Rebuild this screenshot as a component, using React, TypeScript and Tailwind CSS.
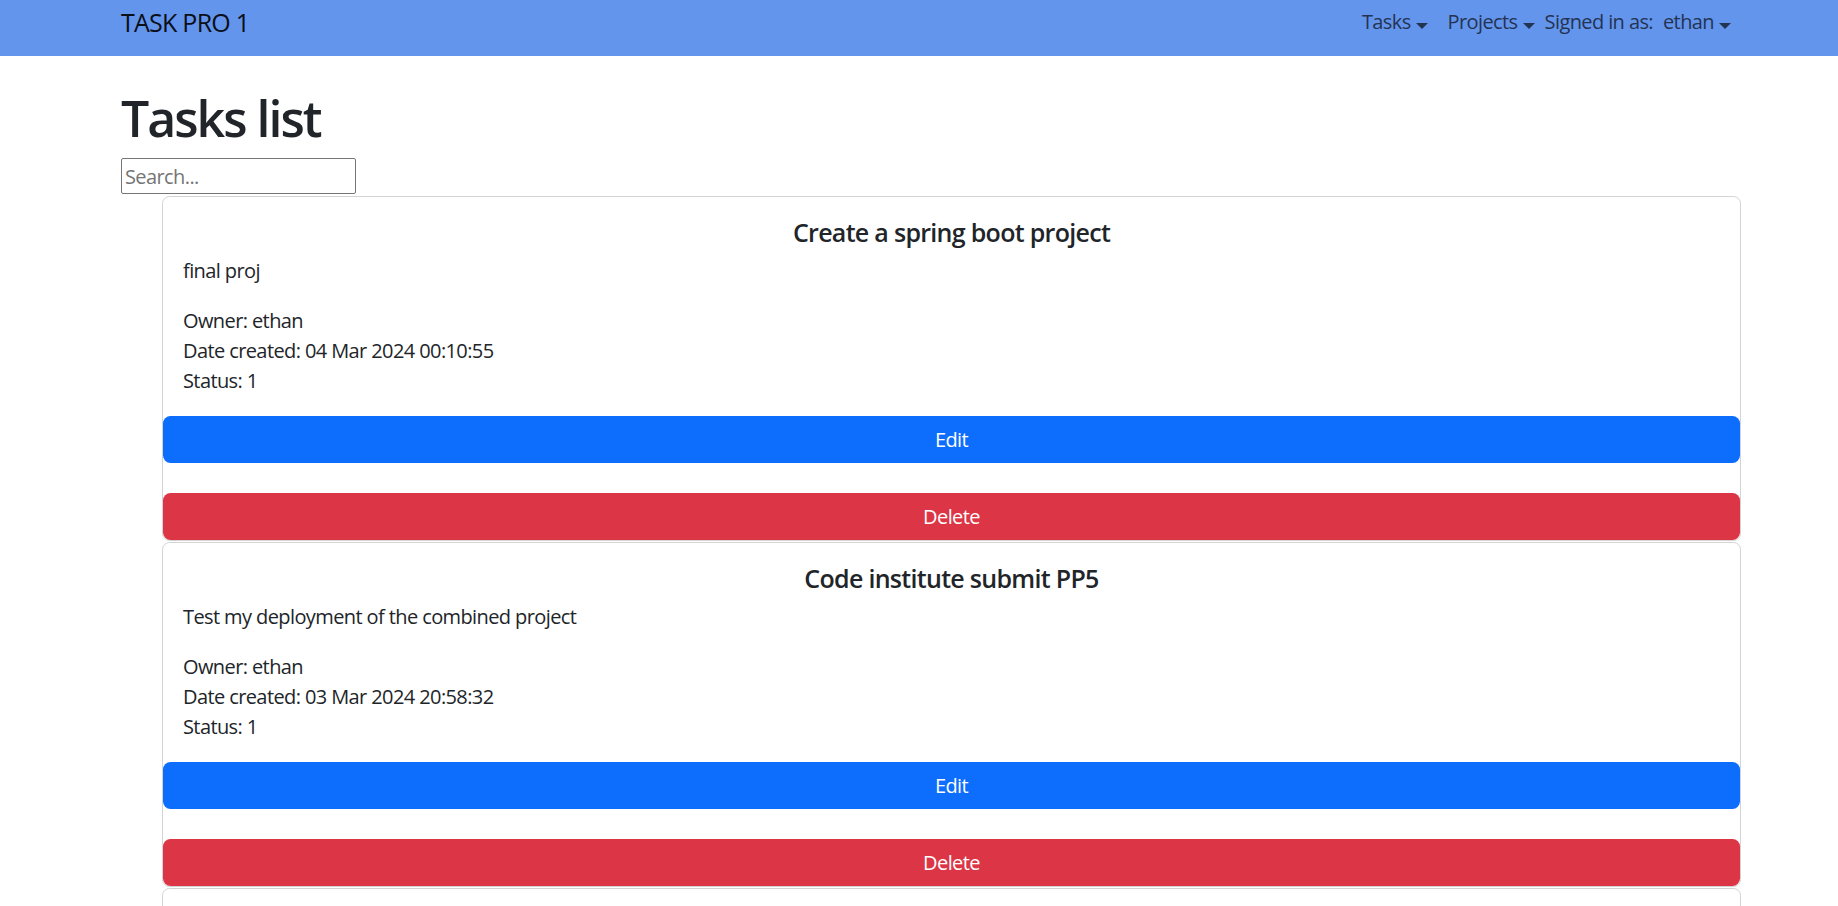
const tasks = [
  {
    title: 'Create a spring boot project',
    description: 'final proj',
    owner: 'ethan',
    created: '04 Mar 2024 00:10:55',
    status: 1,
  },
  {
    title: 'Code institute submit PP5',
    description: 'Test my deployment of the combined project',
    owner: 'ethan',
    created: '03 Mar 2024 20:58:32',
    status: 1,
  },
  {
    title: 'Write the README',
    description: 'Document the features and testing',
    owner: 'ethan',
    created: '02 Mar 2024 14:21:07',
    status: 0,
  },
];

const NavDropdown = ({ label }: { label: string }) => (
  <a href="#" className="px-[10px] flex items-baseline">
    {label}
    <span className="ml-[5px] inline-block align-[0.255em] border-t-[6px] border-x-[6px] border-b-0 border-t-current border-x-transparent" />
  </a>
);

const TaskCard = ({ task }: { task: (typeof tasks)[number] }) => (
  <div className="mb-[1px] border border-[#d3d3d3] rounded-[7.5px] bg-white">
    <div className="p-[20px]">
      <h5 className="text-center text-[25px] leading-[30px] font-semibold tracking-[-0.7px] mb-[9px]">{task.title}</h5>
      <p className="text-[20px] leading-[30px] tracking-[-0.6px] mb-[20px]">{task.description}</p>
      <p className="text-[20px] leading-[30px] tracking-[-0.6px]">
        Owner: {task.owner}
        <br />
        Date created: {task.created}
        <br />
        Status: {task.status}
      </p>
    </div>
    <button className="block w-full h-[47px] rounded-[7.5px] bg-[#0d6efd] text-white text-[20px] leading-[30px] tracking-[-0.6px]">
      Edit
    </button>
    <button className="block w-full h-[47px] mt-[30px] rounded-[7.5px] bg-[#dc3545] text-white text-[20px] leading-[30px] tracking-[-0.6px]">
      Delete
    </button>
  </div>
);

export default function App() {
  return (
    <div className="h-screen overflow-hidden bg-white text-[#212529] font-['Open_Sans',sans-serif]">
      <nav className="h-[56px] bg-[#6495ed]">
        <div className="ml-[121px] w-[1620px] h-[44px] flex items-center justify-between">
          <a href="#" className="text-[25px] leading-[30px] tracking-[-0.75px] text-[#0a0f18]">
            TASK PRO 1
          </a>
          <div className="flex items-center text-[20px] leading-[30px] tracking-[-0.6px] text-[#233453]">
            <NavDropdown label="Tasks" />
            <NavDropdown label="Projects" />
            <span>Signed in as:</span>
            <NavDropdown label="ethan" />
          </div>
        </div>
      </nav>

      <main className="ml-[121px] w-[1620px]">
        <h1 className="mt-[32px] mb-[10px] text-[50px] leading-[60px] font-semibold tracking-[-2px]">Tasks list</h1>
        <input
          type="text"
          placeholder="Search..."
          className="block w-[235px] h-[36px] border border-[#767676] rounded-[2px] px-[3px] text-[20px] tracking-[-0.6px] placeholder:text-[#757575] outline-none"
        />
        <div className="ml-[41px] mt-[2px]">
          {tasks.map((task, i) => (
            <TaskCard key={i} task={task} />
          ))}
        </div>
      </main>
    </div>
  );
}
